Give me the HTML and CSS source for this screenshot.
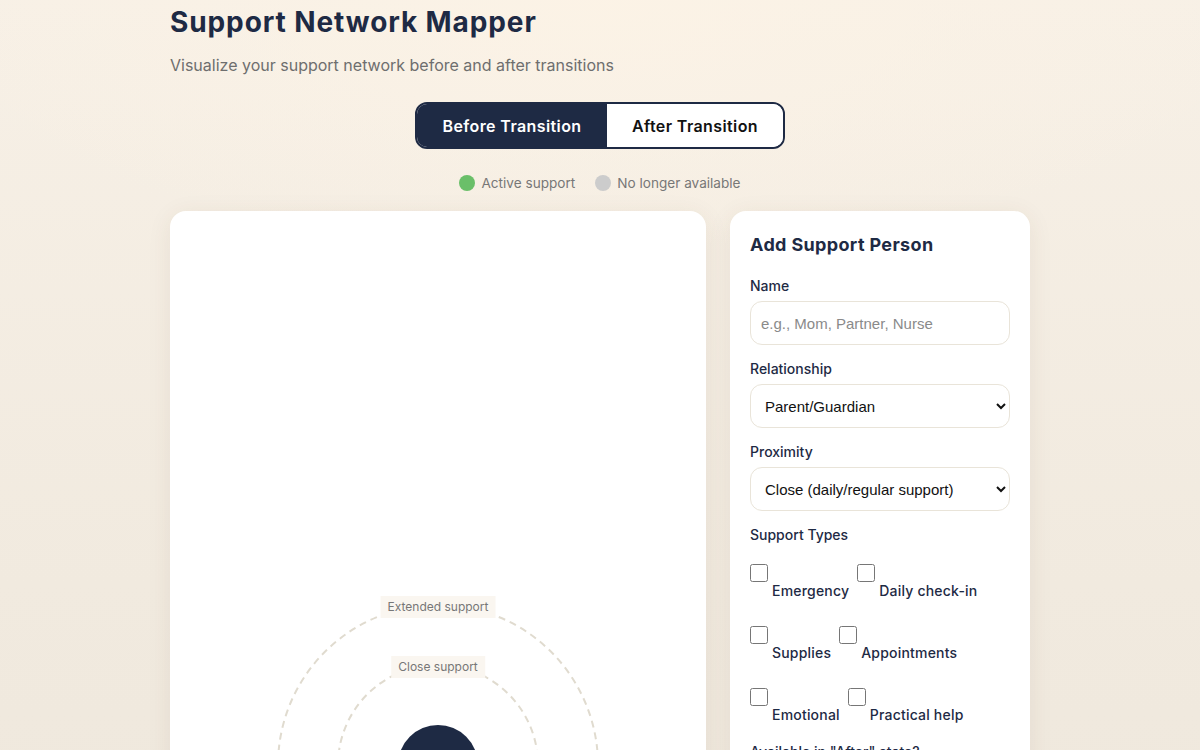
FILE: index.html
```html
<!DOCTYPE html>
<html lang="en">
<head>
<meta charset="utf-8">
<title>Support Network Mapper</title>
<link rel="stylesheet" href="styles.css">
</head>
<body>
<div class="page">
  <header class="header">
    <h1 class="title">Support Network Mapper</h1>
    <p class="subtitle">Visualize your support network before and after transitions</p>
  </header>

  <div class="toggle-wrap">
    <div class="toggle">
      <button class="toggle-btn active">Before Transition</button>
      <button class="toggle-btn">After Transition</button>
    </div>
  </div>

  <div class="legend">
    <span class="legend-item"><span class="dot dot-active"></span>Active support</span>
    <span class="legend-item"><span class="dot dot-gone"></span>No longer available</span>
  </div>

  <main class="main">
    <section class="card canvas-card">
      <div class="canvas">
        <svg class="rings" width="536" height="760" viewBox="0 0 536 760">
          <circle cx="268" cy="554" r="160" fill="none" stroke="#e0dbcf" stroke-width="2" stroke-dasharray="7 5"/>
          <circle cx="268" cy="554" r="100" fill="none" stroke="#e0dbcf" stroke-width="2" stroke-dasharray="7 5"/>
          <circle cx="268" cy="554" r="40" fill="#1e2a44"/>
        </svg>
        <span class="ring-label label-extended">Extended support</span>
        <span class="ring-label label-close">Close support</span>
      </div>
    </section>

    <aside class="card form-card">
      <h2 class="form-title">Add Support Person</h2>

      <label class="field-label" for="name">Name</label>
      <input class="field" id="name" type="text" placeholder="e.g., Mom, Partner, Nurse">

      <label class="field-label" for="rel">Relationship</label>
      <select class="field select" id="rel">
        <option>Parent/Guardian</option>
      </select>

      <label class="field-label" for="prox">Proximity</label>
      <select class="field select" id="prox">
        <option>Close (daily/regular support)</option>
      </select>

      <div class="field-label">Support Types</div>
      <div class="checks">
        <label class="check"><input type="checkbox"><span>Emergency</span></label>
        <label class="check"><input type="checkbox"><span>Daily check-in</span></label>
        <label class="check"><input type="checkbox"><span>Supplies</span></label>
        <label class="check"><input type="checkbox"><span>Appointments</span></label>
        <label class="check"><input type="checkbox"><span>Emotional</span></label>
        <label class="check"><input type="checkbox"><span>Practical help</span></label>
      </div>

      <div class="field-label after-label">Available in "After" state?</div>
    </aside>
  </main>
</div>
</body>
</html>
```

FILE: styles.css
```css
* { box-sizing: border-box; }

html, body {
  margin: 0;
  padding: 0;
}

body {
  font-family: Inter, "Noto Sans", sans-serif;
  color: #1e2a44;
  min-height: 750px;
  background:
    radial-gradient(ellipse 700px 260px at 50% 0%, rgba(252, 243, 230, 0.9), rgba(252, 243, 230, 0) 100%),
    linear-gradient(180deg, #f7f0e6 0%, #f1eadf 60%, #eee7dc 100%);
  overflow: hidden;
}

.page {
  width: 860px;
  margin: 0 auto;
  padding-top: 4px;
}

.title {
  margin: 0;
  font-family: Inter, sans-serif;
  font-weight: 700;
  font-size: 28px;
  line-height: 36px;
  letter-spacing: 0.9px;
  color: #1e2a44;
}

.subtitle {
  margin: 15px 0 0;
  font-size: 16px;
  line-height: 20px;
  color: #6e6e6e;
}

.toggle-wrap {
  display: flex;
  justify-content: center;
  margin-top: 27px;
}

.toggle {
  display: flex;
  border: 2px solid #1e2a44;
  border-radius: 12px;
  overflow: hidden;
  background: #fff;
}

.toggle-btn {
  border: 0;
  margin: 0;
  height: 43px;
  font-family: Inter, sans-serif;
  font-weight: 600;
  font-size: 16px;
  letter-spacing: 0.4px;
  color: #111;
  background: #fff;
  padding: 0;
  width: 176px;
}

.toggle-btn.active {
  background: #1e2a44;
  color: #fff;
  width: 190px;
}

.legend {
  display: flex;
  justify-content: center;
  gap: 20px;
  margin-top: 25px;
  font-size: 13.6px;
  line-height: 18px;
  color: #777;
}

.legend-item {
  display: inline-flex;
  align-items: center;
  gap: 6px;
}

.dot {
  width: 16px;
  height: 16px;
  border-radius: 50%;
  display: inline-block;
}

.dot-active { background: #6abf69; }
.dot-gone { background: #cccccc; }

.main {
  display: grid;
  grid-template-columns: 536px 300px;
  gap: 24px;
  margin-top: 19px;
  align-items: start;
}

.card {
  background: #fff;
  border-radius: 16px;
  box-shadow: 0 4px 24px rgba(90, 70, 40, 0.08);
}

.canvas-card {
  height: 760px;
  overflow: hidden;
}

.canvas {
  position: relative;
  width: 536px;
  height: 760px;
}

.rings {
  display: block;
}

.ring-label {
  position: absolute;
  left: 50%;
  transform: translateX(-50%);
  font-size: 12px;
  line-height: 14px;
  color: #777;
  background: #faf6f0;
  padding: 4px 7px;
  white-space: nowrap;
}

.label-extended { top: 385px; }
.label-close { top: 445px; }

.form-card {
  padding: 22px 20px 20px;
  min-height: 560px;
}

.form-title {
  margin: 0 0 20px;
  font-family: Inter, sans-serif;
  font-weight: 700;
  font-size: 18px;
  line-height: 24px;
  letter-spacing: 0.35px;
  color: #1e2a44;
}

.field-label {
  display: block;
  font-size: 14px;
  font-weight: 500;
  line-height: 18px;
  color: #1e2a44;
  margin-bottom: 6px;
}

.field {
  display: block;
  width: 260px;
  height: 44px;
  border: 1px solid #e9e4d9;
  border-radius: 12px;
  background: #fff;
  font-family: "Liberation Sans", Arial, sans-serif;
  font-size: 15px;
  color: #111;
  padding: 0 10px;
  margin-bottom: 15px;
  outline: none;
}

.field::placeholder { color: #8a8a8a; }

.select {
  padding: 0 6px 0 10px;
}

.checks {
  display: flex;
  flex-wrap: wrap;
  column-gap: 8px;
  row-gap: 25px;
  margin-top: 20px;
  margin-bottom: 18px;
}

.check {
  display: flex;
  align-items: flex-start;
  font-size: 14px;
  font-weight: 500;
  letter-spacing: 0.2px;
  color: #1e2a44;
}

.check input {
  width: 18px;
  height: 18px;
  margin: 0 4px 0 0;
}

.check span {
  padding-top: 17px;
  line-height: 20px;
}

.after-label {
  margin-top: 0;
}
```
